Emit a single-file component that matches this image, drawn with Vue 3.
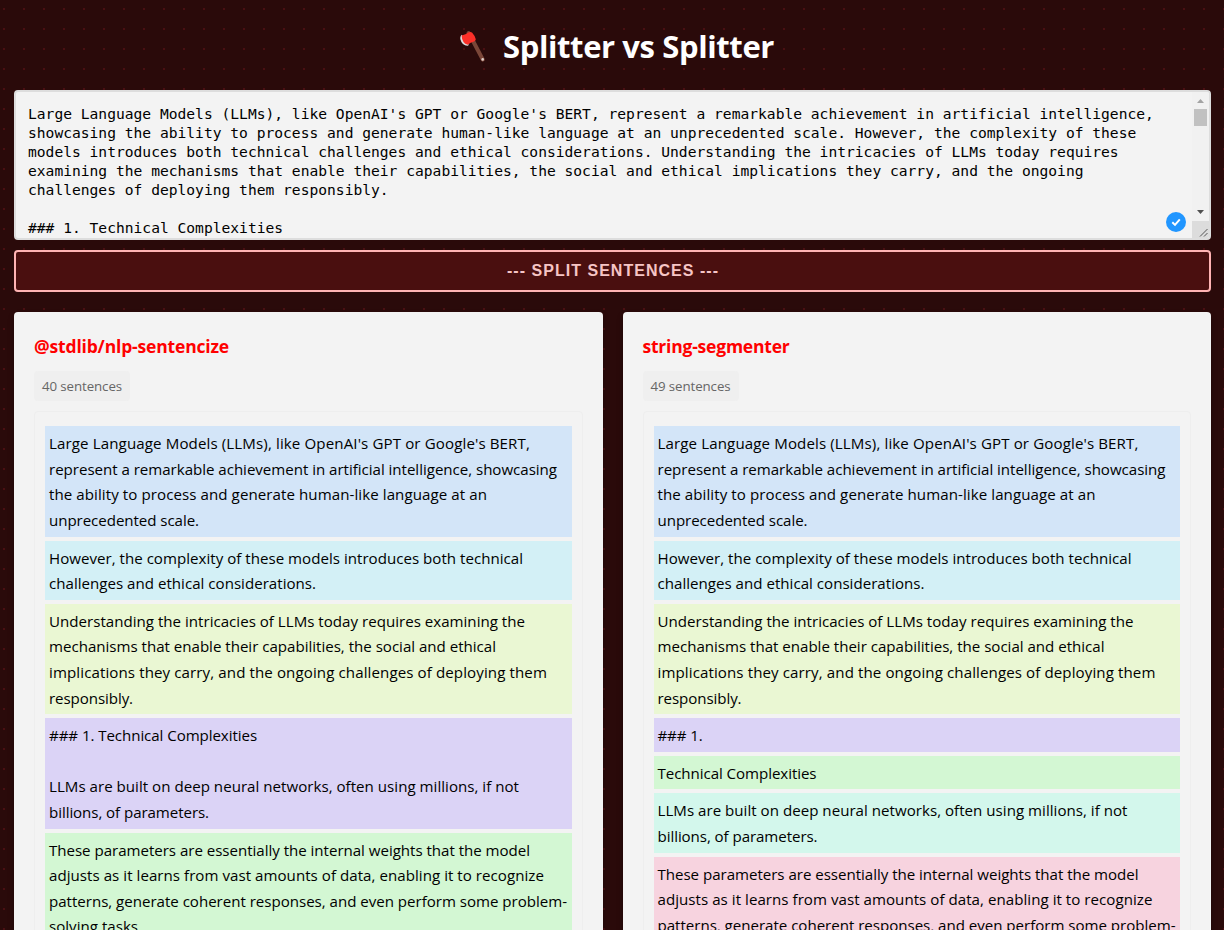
<script setup>
import { ref, nextTick } from 'vue'

const sourceLines = [
  "Large Language Models (LLMs), like OpenAI's GPT or Google's BERT, represent a remarkable achievement in artificial intelligence,",
  'showcasing the ability to process and generate human-like language at an unprecedented scale. However, the complexity of these',
  'models introduces both technical challenges and ethical considerations. Understanding the intricacies of LLMs today requires',
  'examining the mechanisms that enable their capabilities, the social and ethical implications they carry, and the ongoing',
  'challenges of deploying them responsibly.',
  '',
  '### 1. Technical Complexities',
]

// Each line carries its text and its set width in pixels.
const intro = [
  ["Large Language Models (LLMs), like OpenAI's GPT or Google's BERT,", 481],
  ['represent a remarkable achievement in artificial intelligence, showcasing', 508],
  ['the ability to process and generate human-like language at an', 438],
  ['unprecedented scale.', 150],
]
const however = [
  ['However, the complexity of these models introduces both technical', 474],
  ['challenges and ethical considerations.', 267],
]
const understanding = [
  ['Understanding the intricacies of LLMs today requires examining the', 476],
  ['mechanisms that enable their capabilities, the social and ethical', 447],
  ['implications they carry, and the ongoing challenges of deploying them', 498],
  ['responsibly.', 84],
]
const built = [
  ['LLMs are built on deep neural networks, often using millions, if not', 470],
  ['billions, of parameters.', 160],
]
const parameters = [
  ['These parameters are essentially the internal weights that the model', 481],
  ['adjusts as it learns from vast amounts of data, enabling it to recognize', 495],
  ['patterns, generate coherent responses, and even perform some problem-', 518],
  ['solving tasks.', 93],
]

const panels = ref([
  {
    name: '@stdlib/nlp-sentencize', nameWidth: 195, count: 40,
    items: [
      { color: 'blue', lines: intro },
      { color: 'cyan', lines: however },
      { color: 'lime', lines: understanding },
      { color: 'purple', lines: [['### 1. Technical Complexities', 208], ['', 0], ...built] },
      { color: 'green', lines: parameters },
    ],
  },
  {
    name: 'string-segmenter', nameWidth: 147, count: 49,
    items: [
      { color: 'blue', lines: intro },
      { color: 'cyan', lines: however },
      { color: 'lime', lines: understanding },
      { color: 'purple', lines: [['### 1.', 45]] },
      { color: 'green', lines: [['Technical Complexities', 159]] },
      { color: 'teal', lines: built },
      { color: 'pink', lines: parameters },
    ],
  },
])

// Spreads the difference between natural and set width over the characters.
const vFit = {
  mounted(el, { value }) {
    nextTick(() => {
      const n = el.textContent.length
      if (!n || !value) return
      el.style.letterSpacing = `${(value - el.getBoundingClientRect().width) / n}px`
    })
  },
}
</script>

<template>
  <main class="page">
    <h1 class="title">
      <svg class="axe" width="30" height="34" viewBox="0 0 30 34">
        <path d="M10.6 3 L14 9 L24.8 29.6" stroke="#7a4638" stroke-width="4" stroke-linecap="round" stroke-linejoin="round" />
        <path d="M3.6 4.8 Q1 7.5 3.4 12 Q6 16.2 10.2 15.8 L11 13Z" fill="#dcdcdc" />
        <path d="M3.6 5.4 Q8 4.6 10.4 2.4 Q12.4 1.4 14 2.6 Q16.6 5.4 17.8 9.2 Q17.8 10.8 16 11.4 Q12.4 12.2 9.8 14.8 Q4 13 3.6 5.4Z" fill="#fb3029" />
        <circle cx="24.7" cy="29.4" r="1.3" fill="#e0d0ca" />
      </svg>
      <span v-fit="271">Splitter vs Splitter</span>
    </h1>

    <section class="editor">
      <div class="source">
        <div v-for="(line, i) in sourceLines" :key="i" class="source-line">{{ line }}</div>
      </div>
      <div class="scrollbar">
        <svg width="17" height="17" viewBox="0 0 17 17"><path d="M5 11 L8.5 7 L12 11Z" fill="#a3a3a3" /></svg>
        <div class="thumb"></div>
        <svg class="down" width="17" height="17" viewBox="0 0 17 17"><path d="M5 6 L12 6 L8.5 10Z" fill="#505050" /></svg>
        <svg class="grip" width="17" height="17" viewBox="0 0 17 17"><path d="M8 15.5 L15.5 8 M12 15.5 L15.5 12" stroke="#555" stroke-width="1" /></svg>
      </div>
      <svg class="check" width="20" height="20" viewBox="0 0 20 20">
        <circle cx="10" cy="10" r="10" fill="#2196ff" />
        <path d="M6.3 10.3 L9 12.9 L13.8 7.4" fill="none" stroke="#fff" stroke-width="2" />
      </svg>
    </section>

    <button class="split"><span v-fit="212">--- SPLIT SENTENCES ---</span></button>

    <section class="panels">
      <article v-for="panel in panels" :key="panel.name" class="panel">
        <h2 class="name"><span v-fit="panel.nameWidth">{{ panel.name }}</span></h2>
        <div class="count"><span v-fit="80">{{ panel.count }} sentences</span></div>
        <div class="result">
          <div v-for="(item, i) in panel.items" :key="i" class="sentence" :class="item.color">
            <div v-for="(line, j) in item.lines" :key="j" class="line">
              <span v-fit="line[1]">{{ line[0] }}</span>
            </div>
          </div>
        </div>
      </article>
    </section>
  </main>
</template>

<style>
html, body { overflow: hidden; background: #280a0a; }
</style>

<style scoped>
* { box-sizing: border-box; }
.page {
  height: 930px;
  overflow: hidden;
  padding: 0 13px 0 14px;
  display: flex;
  flex-direction: column;
  font-family: "Open Sans", "Noto Sans", sans-serif;
  color: #000;
  background-color: #2a0a0a;
  background-image: conic-gradient(from 0deg at 2px 2px, transparent 270deg, #4a0f12 270deg);
  background-position: 3px 8px;
  background-size: 20px 20px;
}
.title {
  height: 90px;
  margin: 0;
  padding: 2px 0 0 444px;
  display: flex;
  align-items: center;
  flex: none;
  color: #fff;
  font-size: 31px;
  font-weight: 700;
  line-height: 44px;
  white-space: nowrap;
}
.axe { width: 30px; margin: 1px 15px 0 0; fill: none; }
.editor {
  position: relative;
  height: 150px;
  flex: none;
  display: flex;
  justify-content: space-between;
  border: 2px solid #ddd;
  border-radius: 4px;
  background: #f3f3f3;
  overflow: hidden;
}
.source { padding: 12px 0 0 12px; }
.source-line {
  height: 19px;
  font: 14.61px/19px "DejaVu Sans Mono", monospace;
  white-space: pre;
}
.scrollbar { width: 17px; display: flex; flex-direction: column; flex: none; background: #f1f1f1; }
.thumb { width: 13px; height: 17px; margin: 0 2px; background: #c1c1c1; }
.down { margin-top: auto; }
.grip { background: #dcdcdc; }
.check { position: absolute; right: 23px; bottom: 6px; }
.split {
  height: 42px;
  margin: 10px 0 20px;
  padding: 0 0 0 1px;
  flex: none;
  border: 2px solid #ffb3b3;
  border-radius: 4px;
  background: #4a0f0f;
  color: #f6c5c5;
  font: 700 16px/36px "Liberation Sans", sans-serif;
}
.panels { display: grid; grid-template-columns: 1fr 1fr; gap: 20px; flex: none; }
.panel {
  min-width: 0;
  height: 700px;
  padding: 19px 20px 20px;
  border-radius: 4px;
  background: #f3f3f3;
  box-shadow: 0 4px 6px rgba(0, 0, 0, 0.3);
}
.name { margin: 0 0 10px; height: 30px; color: #f00; font-size: 17.5px; font-weight: 700; line-height: 30px; white-space: nowrap; }
.count {
  width: 96px;
  height: 30px;
  padding: 0 8px;
  margin-bottom: 10px;
  border-radius: 4px;
  background: #efefef;
  color: #666;
  font-size: 13.3px;
  line-height: 30px;
  white-space: nowrap;
}
.result {
  display: flex;
  flex-direction: column;
  gap: 4px;
  padding: 14.4px 10px;
  border: 1px solid #eee;
  border-radius: 4px;
}
.sentence { padding: 4.9px 4px 3.1px; }
.line { height: 25.6px; font-size: 15.1px; line-height: 25.6px; white-space: nowrap; }
.blue { background: #d3e5f8; }
.cyan { background: #d3f0f6; }
.lime { background: #eaf7d3; }
.purple { background: #dbd3f6; }
.green { background: #d3f7d3; }
.teal { background: #d3f7ec; }
.pink { background: #f7d3df; }
</style>
